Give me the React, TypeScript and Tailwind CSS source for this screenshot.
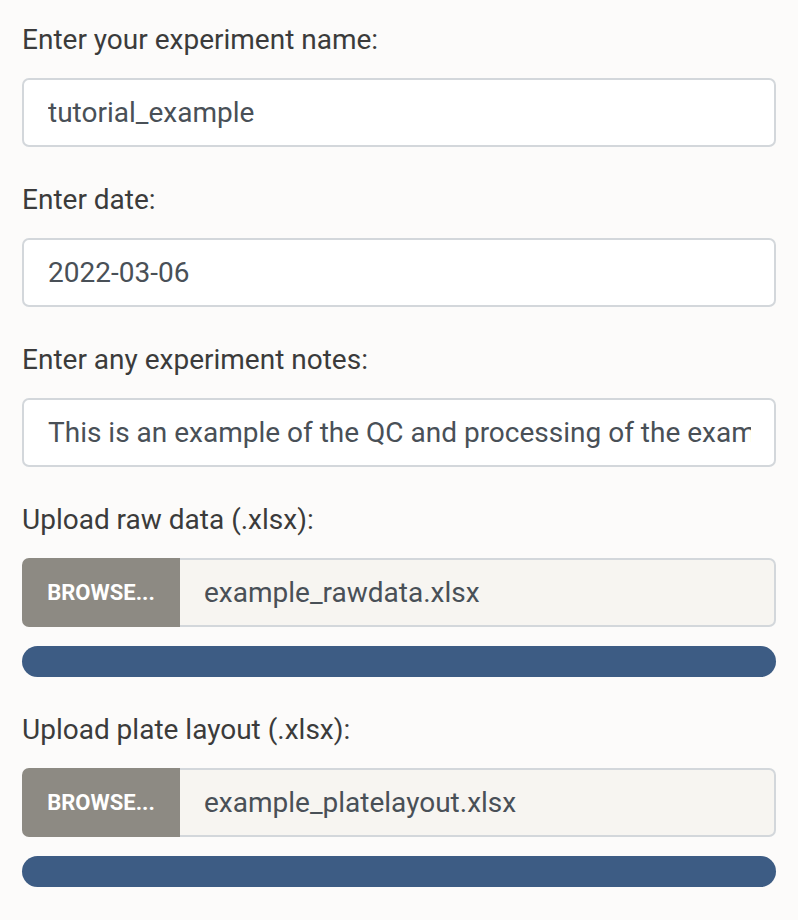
import React from 'react'

function Label({ children }: { children: React.ReactNode }) {
  return <label className="block text-[28px] leading-[37px] text-[#3b3b3b] mb-[20px]">{children}</label>
}

function TextField({ label, value }: { label: string; value: string }) {
  return (
    <div className="mb-[34px]">
      <Label>{label}</Label>
      <input
        readOnly
        value={value}
        className="block w-full h-[69px] rounded-[7px] border-2 border-[#d3d7db] bg-white pl-[24px] pr-[23px] text-[28px] text-[#495057] outline-none"
      />
    </div>
  )
}

function FileField({ label, file }: { label: string; file: string }) {
  return (
    <div className="mb-[34px]">
      <Label>{label}</Label>
      <div className="flex h-[69px]">
        <div className="flex w-[158px] shrink-0 items-center justify-center rounded-l-[7px] bg-[#8d8a83] text-[22px] font-bold text-white">
          BROWSE...
        </div>
        <div className="flex flex-1 items-center rounded-r-[7px] border-2 border-l-0 border-[#d3d7db] bg-[#f7f5f1] pl-[24px] text-[28px] text-[#495057]">
          {file}
        </div>
      </div>
      <div className="mt-[19px] h-[31px] rounded-full bg-[#3d5c84]" />
    </div>
  )
}

export default function App() {
  return (
    <div className="min-h-screen bg-[#fcfbfa] px-[22px] pt-[21px] font-['Roboto',sans-serif]" style={{ width: 798 }}>
      <TextField label="Enter your experiment name:" value="tutorial_example" />
      <TextField label="Enter date:" value="2022-03-06" />
      <TextField
        label="Enter any experiment notes:"
        value="This is an example of the QC and processing of the example dataset"
      />
      <FileField label="Upload raw data (.xlsx):" file="example_rawdata.xlsx" />
      <FileField label="Upload plate layout (.xlsx):" file="example_platelayout.xlsx" />
    </div>
  )
}
